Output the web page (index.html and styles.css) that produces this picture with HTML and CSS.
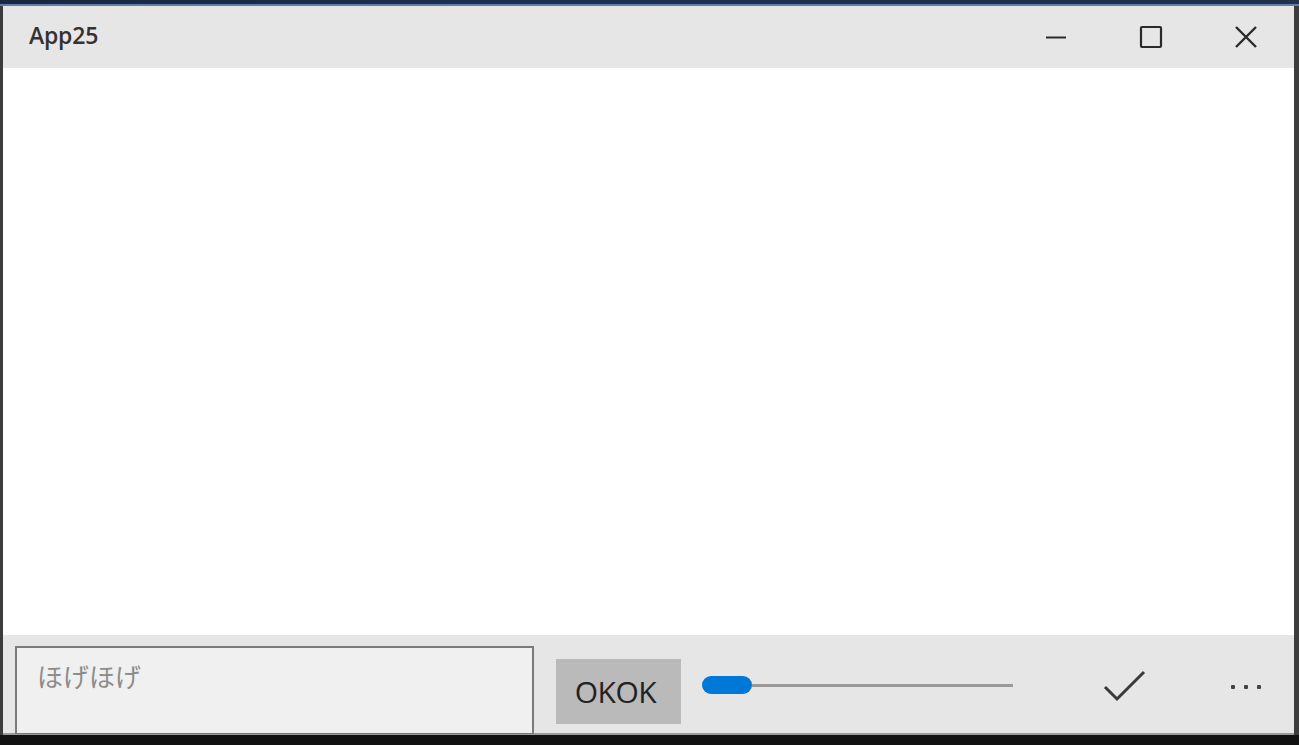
FILE: index.html
```html
<!DOCTYPE html>
<html lang="ja">
<head>
<meta charset="utf-8">
<title>App25</title>
<link rel="stylesheet" href="styles.css">
</head>
<body>
<div class="desk-top"></div>
<div class="frame">
  <div class="window">
    <header class="titlebar">
      <span class="app-title">App25</span>
      <div class="caption-buttons">
        <button class="cap-btn" aria-label="Minimize">
          <svg width="22" height="22" viewBox="0 0 22 22"><path d="M1 11.5h20" stroke="#2a2a2a" stroke-width="2" fill="none"/></svg>
        </button>
        <button class="cap-btn" aria-label="Maximize">
          <svg width="24" height="24" viewBox="0 0 24 24"><rect x="2" y="2" width="20" height="20" rx="1" stroke="#2a2a2a" stroke-width="2.2" fill="none"/></svg>
        </button>
        <button class="cap-btn" aria-label="Close">
          <svg width="24" height="24" viewBox="0 0 24 24"><path d="M2 2L22 22M22 2L2 22" stroke="#2a2a2a" stroke-width="2.4" fill="none"/></svg>
        </button>
      </div>
    </header>
    <main class="content"></main>
    <footer class="commandbar">
      <div class="textbox"><span class="placeholder">ほげほげ</span></div>
      <button class="ok-btn">OKOK</button>
      <div class="slider">
        <div class="thumb"></div>
        <div class="track"></div>
      </div>
      <button class="icon-btn check" aria-label="Accept">
        <svg width="44" height="34" viewBox="0 0 44 34"><path d="M2 17L14 29L41 2" stroke="#3a3a3a" stroke-width="3" fill="none"/></svg>
      </button>
      <button class="icon-btn more" aria-label="More">
        <span class="dot"></span><span class="dot"></span><span class="dot"></span>
      </button>
    </footer>
  </div>
  <div class="right-edge"></div>
</div>
<div class="desk-bottom"></div>
</body>
</html>
```

FILE: styles.css
```css
html, body {
  margin: 0;
  padding: 0;
  width: 1299px;
  height: 745px;
  overflow: hidden;
  background: #111;
  font-family: "Noto Sans", "Noto Sans CJK JP", sans-serif;
}

.desk-top {
  height: 4px;
  background: linear-gradient(90deg, #1a2740 0%, #1d3050 40%, #22304a 100%);
  border-bottom: 2px solid #5f7fa8;
}

.frame {
  display: flex;
  height: 729px;
}

.window {
  flex: 1;
  display: flex;
  flex-direction: column;
  border-left: 3px solid #3c3c3c;
  background: #fff;
}

.right-edge {
  width: 5px;
  background: #3d3d3d;
}

.titlebar {
  height: 62px;
  background: #e6e6e6;
  display: flex;
  align-items: center;
  justify-content: space-between;
}

.app-title {
  margin-left: 26px;
  font-size: 23px;
  color: #333;
  font-family: "Open Sans", "Noto Sans", sans-serif;
  font-weight: 600;
  letter-spacing: -0.2px;
  margin-top: -4px;
}

.caption-buttons {
  display: flex;
  align-items: center;
  height: 100%;
  margin-right: 1px;
}

.cap-btn {
  width: 95px;
  height: 100%;
  border: 0;
  padding: 0;
  background: transparent;
  display: flex;
  align-items: center;
  justify-content: center;
}

.content {
  flex: 1;
  background: #fff;
}

.commandbar {
  height: 100px;
  background: #e6e6e6;
  display: flex;
  align-items: flex-start;
  padding-left: 12px;
  box-sizing: border-box;
  border-bottom: 2px solid #9a9a9a;
}

.textbox {
  width: 519px;
  height: 88px;
  margin-top: 11px;
  box-sizing: border-box;
  border: 2px solid #7a7a7a;
  border-bottom-width: 1px;
  background: #f0f0f0;
  padding: 11px 0 0 20px;
}

.placeholder {
  font-family: "Noto Sans CJK JP", sans-serif;
  font-size: 26px;
  line-height: 34px;
  color: #8c8c8c;
  letter-spacing: 0;
}

.ok-btn {
  margin-left: 22px;
  margin-top: 24px;
  width: 125px;
  height: 65px;
  border: 0;
  background: #bababa;
  font-family: "Open Sans", "Noto Sans", sans-serif;
  font-size: 30px;
  color: #222;
  padding: 0 6px 0 0;
  letter-spacing: -0.5px;
}

.slider {
  margin-left: 21px;
  margin-top: 41px;
  width: 311px;
  display: flex;
  align-items: center;
  height: 18px;
}

.thumb {
  width: 50px;
  height: 18px;
  border-radius: 9px;
  background: #0078d7;
}

.track {
  flex: 1;
  height: 3px;
  background: #9a9a9a;
}

.icon-btn {
  border: 0;
  background: transparent;
  padding: 0;
}

.check {
  margin-left: 90px;
  margin-top: 35px;
  width: 44px;
  height: 34px;
  display: flex;
}

.more {
  margin-left: 84px;
  margin-top: 50px;
  display: flex;
  gap: 9px;
}

.dot {
  width: 4px;
  height: 4px;
  border-radius: 1px;
  background: #444;
}

.desk-bottom {
  height: 10px;
  background: #111;
}
```
